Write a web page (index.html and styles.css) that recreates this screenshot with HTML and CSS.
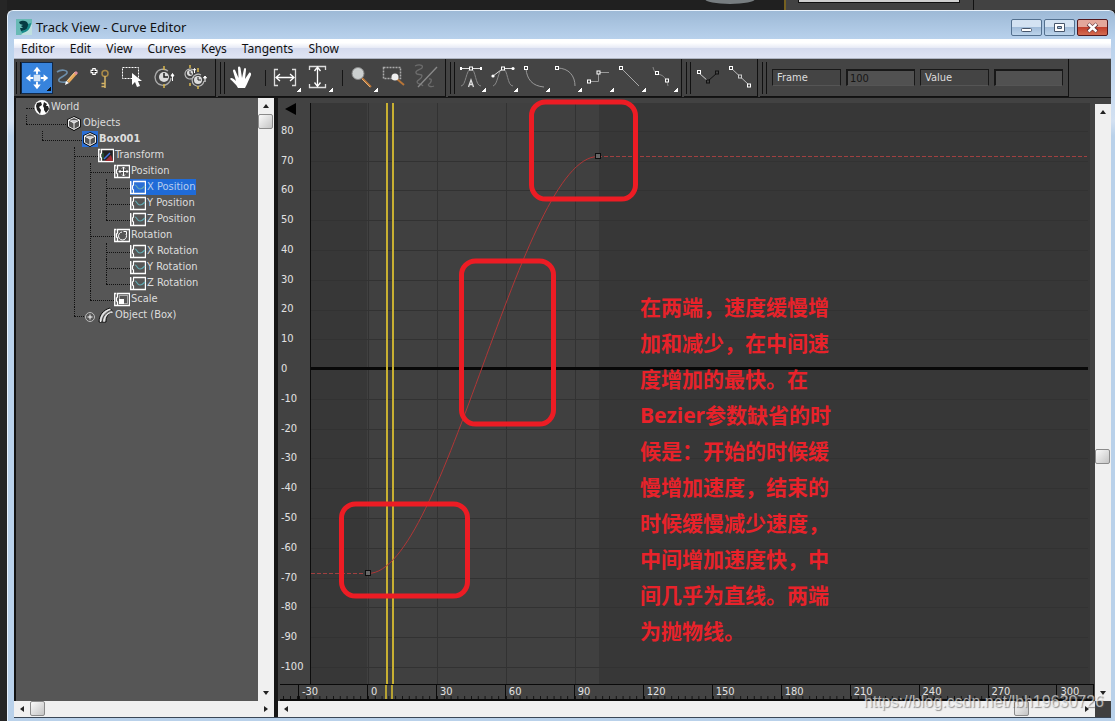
FILE: index.html
```
<!DOCTYPE html>
<html lang="zh-CN">
<head>
  <meta charset="UTF-8">
  <title>Track View - Curve Editor</title>
  <link rel="stylesheet" href="styles.css">
</head>
<body>
  <!-- shared icons -->
  <svg class="defs" aria-hidden="true">
    <symbol id="i-cube" viewBox="0 0 16 16">
      <path d="M8 2.5 13.5 5v6.5L8 14.5 2.5 11.500V5z" fill="#c8c8cc" stroke="#000" stroke-width="2.500"/>
      <path d="M8 2.500 13.500 5v6.500L8 14.500 2.500 11.500V5zM2.500 5 8 8l5.500-3M8 8v6" fill="#555" stroke="#f4f4f4"/>
    </symbol>
    <symbol id="i-curve" viewBox="0 0 16 16">
      <path d="M3 2.500h12.500v12H.5v-12" fill="none" stroke="#fff" stroke-width="1.400"/>
      <path d="M.7 2v13M3.500 3v3l-1 1v3l1 1v3" fill="none" stroke="#fff" stroke-width="1.200"/>
      <path d="M5 6c2 0 2 4 5 4 2 0 3-1 5-3" fill="none" stroke="#62aab2" stroke-width="1.200"/>
    </symbol>
    <symbol id="i-box" viewBox="0 0 16 16">
      <path d="M3 2.500h12.500v12H.7v-12h1.800M3.500 3v3l-1 1v3l1 1v3" fill="none" stroke="#fff" stroke-width="1.300"/>
    </symbol>
  </svg>

  <div class="desktop">
    <div class="behind">
      <svg class="blob" viewBox="0 0 60 10"><ellipse cx="30" cy="-1" rx="25" ry="5" fill="#777d80"/></svg>
      <div class="behind-panel"><div class="behind-field"></div></div>
      <div class="behind-rest"></div>
    </div>

    <div class="window">
      <div class="titlebar">
        <svg class="logo" viewBox="0 0 16 16">
          <rect width="16" height="16" fill="#bfe0df"/>
          <path d="M0 0h16v5L5 16H0z" fill="#68bab5"/>
          <path d="M3 3c3-2 8-2 9 2 1 3-1 7-7 7l-1-3h3L5 7l2-1-3-1z" fill="#063b43"/>
          <path d="M12 5l3-1c0 5-3 9-9 10l-1-2c5 0 7-3 7-7z" fill="#178b8a"/>
        </svg>
        <span class="title">Track View - Curve Editor</span>
        <button class="win-btn" aria-label="Minimize"><svg viewBox="0 0 29 15"><rect x="9.500" y="8.500" width="10" height="3" rx="1" fill="#fff" stroke="#46556b"/></svg></button>
        <button class="win-btn" aria-label="Maximize"><svg viewBox="0 0 29 15"><path d="M9.500 3.500h10v8h-10zM12.500 6.500h4v2h-4z" fill="#fff" fill-rule="evenodd" stroke="#46556b"/></svg></button>
        <button class="win-btn close" aria-label="Close"><svg viewBox="0 0 29 15"><path d="M10 4l9 7.500M19 4l-9 7.500" stroke="#5b3037" stroke-width="4"/><path d="M10.500 4l8 7.500M18.500 4l-8 7.500" stroke="#fff" stroke-width="2.400"/></svg></button>
      </div>

      <div class="client">
        <nav class="menubar">
          <a href="#">Editor</a>
          <a href="#">Edit</a>
          <a href="#">View</a>
          <a href="#">Curves</a>
          <a href="#">Keys</a>
          <a href="#">Tangents</a>
          <a href="#">Show</a>
        </nav>

        <div class="toolbar">
          <div class="group">
            <button class="tool active fly" aria-label="Move keys"><svg viewBox="0 0 32 32">
              <rect x="12.500" y="12.500" width="7" height="7" fill="#d3e5f8"/>
              <path d="M16 4l4 5h-3v3h-2V9h-3zM16 28l4-5h-3v-3h-2v3h-3zM4 16l5-4v3h3v2H9v3zM28 16l-5-4v3h-3v2h3v3z" fill="#fff"/></svg></button>
            <button class="tool" aria-label="Draw curves"><svg viewBox="0 0 32 32">
              <path d="M4 10c4-3 11-2 10 1-1 3-10 5-8 8 1 2 6 1 9 1" fill="none" stroke="#6d8fab" stroke-width="1.600"/>
              <path d="M15 20l8-9" stroke="#e8a95a" stroke-width="3"/><path d="M14 19l8-9" stroke="#f7d69a"/><path d="M22 12l2-2" stroke="#db8c9b" stroke-width="3"/><path d="M12 23l1-4 3 2z" fill="#fff"/></svg></button>
            <button class="tool" aria-label="Add keys"><svg viewBox="0 0 32 32">
              <path d="M9 6v7M5.500 9.500h7" stroke="#fff" stroke-width="3.500"/><path d="M9 7v5M6.500 9.500h5" stroke="#222"/>
              <circle cx="20" cy="11.500" r="3" fill="none" stroke="#a98a48" stroke-width="1.500"/><path d="M20 14v12M16.500 21.500H20M16.500 24.500H20" stroke="#d6b566" stroke-width="1.500"/></svg></button>
            <button class="tool" aria-label="Region tool"><svg viewBox="0 0 32 32">
              <rect x="5.500" y="5.500" width="16" height="11" fill="none" stroke="#fff" stroke-dasharray="2 1"/>
              <path d="M15 11v12l3-3 2 5 3-1-2-5h4z" fill="#fff"/></svg></button>
            <button class="tool" aria-label="Retime tool"><svg viewBox="0 0 32 32">
              <path d="M19 9a8 8 0 1 0 3 7" fill="none" stroke="#aaa" stroke-width="1.300"/><circle cx="15" cy="15" r="5" fill="#ddd"/><path d="M15 11v4h4" fill="none" stroke="#222" stroke-width="1.500"/><path d="M15 4v4M15 22v4" stroke="#d9b74c" stroke-width="1.500"/><path d="M23.500 12v7M22 14l1.500-2.500L25 14z" stroke="#fff" fill="#fff"/></svg></button>
            <button class="tool" aria-label="Retime all"><svg viewBox="0 0 32 32">
              <path d="M12 8a5 5 0 1 0 1 7M20 13a6 6 0 1 0 3 6" fill="none" stroke="#bbb" stroke-width="1.200"/><circle cx="9" cy="11" r="3" fill="#ddd"/><circle cx="17" cy="18" r="4" fill="#ddd"/><path d="M9 9v3h2M17 15v3h3" fill="none" stroke="#222"/><path d="M9 3v3M17 6v4M9 21v3M17 24v3" stroke="#d9b74c" stroke-width="1.500"/><path d="M24 14v6M22.500 16l1.500-2 1.500 2zM13.500 7v4M12.500 8l1-1.500 1 1.500z" stroke="#fff" fill="#fff"/></svg></button>
          </div>
          <div class="group">
            <button class="tool" aria-label="Pan"><svg viewBox="0 0 32 32">
              <path d="M13 26c-2-4-5-6-8-9 1-2 3-1 6 2L8 9c0-2 2-2 2.500 0l3 7-.5-10c0-2 2-2 2.500 0L17 16l2-9c.5-2 2.500-1 2 1l-1 9 4-6c1-1 2.500 0 2 2l-4 9c-1 2-1 2-2 4z" fill="#fff"/></svg></button>
            <span class="sep"></span>
            <button class="tool fly" aria-label="Frame horizontal extents"><svg viewBox="0 0 32 32">
              <path d="M8 7.500H4.500v16H8M22 7.500h3.500v16H22" fill="none" stroke="#ddd" stroke-width="1.300"/><path d="M6 15.500h18M10 12l-4 3.500 4 3.500M20 12l4 3.500-4 3.500" fill="none" stroke="#fff" stroke-width="1.300"/></svg></button>
            <button class="tool fly" aria-label="Frame value extents"><svg viewBox="0 0 32 32">
              <path d="M7.500 8V4.500h16V8M7.500 22v3.500h16V22" fill="none" stroke="#ddd" stroke-width="1.300"/><path d="M15.500 6v18M12.500 9l3-4 3 4M12.500 20.500l3 4 3-4" fill="none" stroke="#fff" stroke-width="1.300"/></svg></button>
            <span class="sep"></span>
            <button class="tool fly" aria-label="Zoom"><svg viewBox="0 0 32 32">
              <path d="M15 16l9 9" stroke="#b77538" stroke-width="2"/><path d="M15 17l8 8" stroke="#e6b075"/><circle cx="11" cy="11.500" r="6" fill="#ccd0d0" stroke="#888"/></svg></button>
            <button class="tool" aria-label="Zoom region"><svg viewBox="0 0 32 32">
              <rect x="4.500" y="5.500" width="17" height="11" fill="none" stroke="#aaa" stroke-width="1.500" stroke-dasharray="2 1"/><path d="M18 17l7 6" stroke="#b77538" stroke-width="2"/><circle cx="16" cy="15" r="3.500" fill="#eee"/></svg></button>
            <button class="tool" aria-label="Isolate curve"><svg viewBox="0 0 32 32">
              <path d="M4 4c4-2 9-1 7 2-2 2-7 2-6 5s6 0 6 3-5 4-5 6 5 2 6 4M18 17c4-1 2 4 0 5s1 4 5 2" fill="none" stroke="#6c6c6c" stroke-width="1.300"/><path d="M7 25 26 5" stroke="#8a8a8a" stroke-width="1.300"/></svg></button>
          </div>
          <div class="group">
            <button class="tool fly" aria-label="Auto tangents"><svg viewBox="0 0 32 32">
              <path d="M6 24c5 0 5-17 10-17s4 17 10 17" fill="none" stroke="#888"/><path d="M5 6.500h22" stroke="#ddd"/><path d="M5 6.500h2M25 6.500h2" stroke="#fff" stroke-width="3"/><rect x="14.500" y="5" width="3" height="3" fill="#444" stroke="#fff"/><path d="M13.500 25l2.500-7 2.500 7M14.500 22.500h3" fill="none" stroke="#ddd" stroke-width="1.300"/></svg></button>
            <button class="tool fly" aria-label="Spline tangents"><svg viewBox="0 0 32 32">
              <path d="M6 24c5-1 5-17 10-17s4 17 10 17" fill="none" stroke="#888"/><path d="M6 14l10-7.500h10" fill="none" stroke="#ddd"/><circle cx="6" cy="14" r="1.600" fill="#fff"/><circle cx="26" cy="6.500" r="1.600" fill="#fff"/><rect x="14.500" y="5" width="3" height="3" fill="#444" stroke="#fff"/></svg></button>
            <button class="tool fly" aria-label="Fast tangents"><svg viewBox="0 0 32 32">
              <path d="M7 7c1 10 6 17 18 18" fill="none" stroke="#999"/><rect x="5.500" y="4.500" width="3" height="3" fill="#444" stroke="#fff"/></svg></button>
            <button class="tool fly" aria-label="Slow tangents"><svg viewBox="0 0 32 32">
              <path d="M6 6c12 0 18 8 18 18" fill="none" stroke="#999"/><rect x="4.500" y="4.500" width="3" height="3" fill="#444" stroke="#fff"/></svg></button>
            <button class="tool fly" aria-label="Stepped tangents"><svg viewBox="0 0 32 32">
              <path d="M6 19.500h9.500v-9H26" fill="none" stroke="#999"/><rect x="4.500" y="18" width="3" height="3" fill="#444" stroke="#fff"/><rect x="14" y="9" width="3" height="3" fill="#444" stroke="#fff"/></svg></button>
            <button class="tool fly" aria-label="Linear tangents"><svg viewBox="0 0 32 32">
              <path d="M6 6l18 18" stroke="#aaa"/><rect x="4.500" y="4.500" width="3" height="3" fill="#444" stroke="#fff"/></svg></button>
            <button class="tool fly" aria-label="Smooth tangents"><svg viewBox="0 0 32 32">
              <path d="M6 5c1 6 5 7 8 8s6 5 7 11" fill="none" stroke="#888"/><rect x="8.500" y="9.500" width="3" height="3" fill="#444" stroke="#fff"/><rect x="18.500" y="17" width="3" height="3" fill="#444" stroke="#fff"/></svg></button>
          </div>
          <div class="group">
            <button class="tool" aria-label="Break tangents"><svg viewBox="0 0 32 32">
              <path d="M8 11l9 8" stroke="#ccc"/><path d="M17 19l9-8" stroke="#111"/><rect x="6.500" y="8.500" width="3" height="3" fill="#444" stroke="#fff"/><rect x="15.500" y="18" width="3" height="3" fill="#444" stroke="#111"/><rect x="24.500" y="9" width="3" height="3" fill="#444" stroke="#111"/></svg></button>
            <button class="tool" aria-label="Unify tangents"><svg viewBox="0 0 32 32">
              <path d="M8 6l18 17" stroke="#bbb"/><rect x="6.500" y="4.500" width="3" height="3" fill="#444" stroke="#fff"/><rect x="15.500" y="13" width="3" height="3" fill="#444" stroke="#ccc"/><rect x="24.500" y="22" width="3" height="3" fill="#444" stroke="#fff"/></svg></button>
          </div>
          <div class="group fields">
            <label for="frame">Frame</label>
            <input type="text" id="frame" value="100">
            <label for="value">Value</label>
            <input type="text" id="value">
          </div>
        </div>

        <div class="panes">
          <div class="tree-pane">
            <ul class="tree">
              <li class="root">
                <div class="row"><svg viewBox="0 0 16 16"><circle cx="8" cy="8.500" r="7.500" fill="#fff"/><path d="M3 4l4-1 1 3-3 2 2 3-1 4-3-4-1-4zM10 3l3 2-1 2h2l1 3-3 4-2-3V9L9 7z" fill="#222"/></svg><span>World</span></div>
                <ul class="flush">
                  <li class="wide">
                    <div class="row"><svg><use href="#i-cube"/></svg><span>Objects</span></div>
                    <ul>
                      <li class="wide">
                        <div class="row bold"><svg class="hot"><use href="#i-cube"/></svg><span>Box001</span></div>
                        <ul class="deep">
                          <li>
                            <div class="row"><svg viewBox="0 0 16 16"><rect x="4" y="3" width="11" height="11" fill="#222"/><use href="#i-box"/><path d="M6 12l6-6" stroke="#4272dd" stroke-width="1.500"/><path d="M7 14h8l-2-6z" fill="#a32c32"/><path d="M5 12V6" stroke="#287844"/></svg><span>Transform</span></div>
                            <ul>
                              <li>
                                <div class="row"><svg viewBox="0 0 16 16"><use href="#i-box"/><path d="M9.500 4v9M5 8.500h9" stroke="#fff"/><path d="M8 5.500 9.500 4 11 5.500M8 11.500 9.500 13l1.500-1.500M6.500 7 5 8.500 6.500 10M12.500 7 14 8.500 12.500 10" fill="none" stroke="#fff"/></svg><span>Position</span></div>
                                <ul>
                                  <li><div class="row"><svg class="hot"><use href="#i-curve"/></svg><span class="selected">X Position</span></div></li>
                                  <li><div class="row"><svg><use href="#i-curve"/></svg><span>Y Position</span></div></li>
                                  <li><div class="row"><svg><use href="#i-curve"/></svg><span>Z Position</span></div></li>
                                </ul>
                              </li>
                              <li>
                                <div class="row"><svg viewBox="0 0 16 16"><use href="#i-box"/><path d="M8 5a4 4 0 1 0 4 2M9.500 4.500h3v3" fill="none" stroke="#fff"/></svg><span>Rotation</span></div>
                                <ul>
                                  <li><div class="row"><svg><use href="#i-curve"/></svg><span>X Rotation</span></div></li>
                                  <li><div class="row"><svg><use href="#i-curve"/></svg><span>Y Rotation</span></div></li>
                                  <li><div class="row"><svg><use href="#i-curve"/></svg><span>Z Rotation</span></div></li>
                                </ul>
                              </li>
                              <li><div class="row"><svg viewBox="0 0 16 16"><use href="#i-box"/><rect x="5.500" y="4.500" width="8" height="8" fill="none" stroke="#fff" stroke-dasharray="1 1"/><path d="M5 8h5v5H5z" fill="#fff"/></svg><span>Scale</span></div></li>
                            </ul>
                          </li>
                          <li class="closed">
                            <div class="row"><button class="expand" aria-label="Expand"><svg viewBox="0 0 12 12"><circle cx="6" cy="6" r="4.500" fill="#555" stroke="#bbb"/><path d="M6 3.500v5M3.500 6h5" stroke="#fff"/></svg></button><svg viewBox="0 0 16 16"><path d="M1 15C1 8 5 3 12 1l3 4c-5 1-7 5-7 10z" fill="#bbb" stroke="#111"/><path d="M2.500 15c0-6 4-11 10-13M6 15c0-5 3-9 9-10" fill="none" stroke="#f6f6f6"/><path d="M4.300 15c0-6 4-10 9-11.500" fill="none" stroke="#333"/></svg><span>Object (Box)</span></div>
                          </li>
                        </ul>
                      </li>
                    </ul>
                  </li>
                </ul>
              </li>
            </ul>
            <div class="scroll vertical tree-v">
              <button class="up" aria-label="Scroll up"></button>
              <div class="thumb"></div>
              <button class="down" aria-label="Scroll down"></button>
            </div>
            <div class="scroll horizontal tree-h">
              <button class="left" aria-label="Scroll left"></button>
              <div class="thumb"></div>
              <button class="right" aria-label="Scroll right"></button>
            </div>
          </div>

          <div class="chart-pane">
            <div class="chart">
              <div class="y-axis">
                <svg class="marker" viewBox="0 0 12 12"><path d="M0 6 11 0v12z"/></svg>
                <span>80</span><span>70</span><span>60</span><span>50</span><span>40</span><span>30</span><span>20</span><span>10</span><span>0</span><span>-10</span><span>-20</span><span>-30</span><span>-40</span><span>-50</span><span>-60</span><span>-70</span><span>-80</span><span>-90</span><span>-100</span>
              </div>
              <div class="plot">
                <svg viewBox="0 0 779 581" preserveAspectRatio="none">
                  <rect class="range" x="56" width="232" height="581"/>
                  <path class="grid" d="M0 28.500h777M0 58.500h777M0 87.500h777M0 117.500h777M0 147.500h777M0 177.500h777M0 207.500h777M0 236.500h777M0 296.500h777M0 326.500h777M0 355.500h777M0 385.500h777M0 415.500h777M0 445.500h777M0 475.500h777M0 504.500h777M0 534.500h777M0 564.500h777"/>
                  <path class="grid" d="M57.500 0v581M126.500 0v581M195.500 0v581M264.500 0v581"/>
                  <path class="zero" d="M0 265.500h777"/>
                  <path class="time" d="M76 0v581M82 0v581"/>
                  <path class="curve dashed" d="M0 470.500h57M287 53.500h489"/>
                  <path class="curve" d="M57 470.500C134 470.500 210 53.500 287 53.500"/>
                  <rect class="key" x="54.500" y="467.500" width="5" height="5"/>
                  <rect class="key" x="284.500" y="50.500" width="5" height="5"/>
                  <rect class="mark" x="220.500" y="-1" width="104" height="97" rx="14"/>
                  <rect class="mark" x="150.500" y="158" width="92" height="163" rx="14"/>
                  <rect class="mark" x="30.500" y="401" width="126" height="92" rx="14"/>
                </svg>
                <p class="note">在两端，速度缓慢增<br>加和减少，在中间速<br>度增加的最快。在<br>Bezier参数缺省的时<br>候是：开始的时候缓<br>慢增加速度，结束的<br>时候缓慢减少速度，<br>中间增加速度快，中<br>间几乎为直线。两端<br>为抛物线。</p>
              </div>
              <div class="ruler">
                <span>-30</span><span>0</span><span>30</span><span>60</span><span>90</span><span>120</span><span>150</span><span>180</span><span>210</span><span>240</span><span>270</span><span>300</span>
                <svg class="ruler-time" viewBox="0 0 8 14"><path d="M1 0v14M7 0v14"/></svg>
              </div>
            </div>
            <div class="scroll vertical chart-v">
              <button class="up" aria-label="Scroll up"></button>
              <div class="thumb"></div>
              <button class="down" aria-label="Scroll down"></button>
            </div>
            <div class="scroll horizontal chart-h">
              <button class="left" aria-label="Scroll left"></button>
              <div class="thumb"></div>
              <button class="right" aria-label="Scroll right"></button>
            </div>
            <div class="corner"></div>
          </div>
        </div>
      </div>
    </div>
    <div class="watermark">https://blog.csdn.net/lbh19630726</div>
  </div>
</body>
</html>
```
FILE: styles.css
```
*,
*::before {
  box-sizing: border-box;
}
body {
  margin: 0;
  font-family: "Noto Sans", "Noto Sans CJK SC", sans-serif;
  font-size: 12px;
  background: #262626;
}
button {
  padding: 0;
  border: none;
  background: none;
}
svg {
  display: block;
}
.defs {
  position: absolute;
  width: 0;
  height: 0;
}
.desktop {
  position: relative;
  display: flex;
  flex-direction: column;
  height: 100vh;
  min-height: 500px;
  padding-left: 7px;
  background: #262626;
}

/* application behind the window */
.behind {
  display: flex;
  justify-content: flex-end;
  height: 10px;
  background: #202020;
}
.blob {
  width: 60px;
  height: 10px;
  margin-right: 24px;
}
.behind-panel {
  width: 190px;
  padding-left: 12px;
  background: #424242;
  border-left: 2px solid #756020;
  border-right: 1px solid #111;
}
.behind-field {
  width: 162px;
  height: 3px;
  background: #d0d0d0;
  border: solid #111;
  border-width: 0 1px 1px;
}
.behind-rest {
  width: 141px;
  background: #424242;
}

/* window frame */
.window {
  flex: 1;
  min-height: 0;
  display: flex;
  flex-direction: column;
  padding: 0 4px 3px 6px;
  border-left: 1px solid #e8f2fc;
  border-top: 1px solid #e8f2fc;
  border-radius: 6px 6px 0 0;
  background: linear-gradient(#9db9d6, #b8d1ec 28px, #d3e1f2 110px, #b9d1ea 125px);
}
.titlebar {
  display: flex;
  align-items: center;
  gap: 2px;
  height: 28px;
  padding: 4px 3px 0 2px;
}
.logo {
  width: 16px;
  height: 16px;
}
.title {
  flex: 1;
  padding-left: 2px;
  font-size: 13px;
  color: #111;
}
.win-btn {
  width: 31px;
  height: 17px;
  border: 1px solid #53708f;
  border-radius: 2px;
  background: linear-gradient(#d3e2f2 45%, #a1bcd9 50%, #bdd4eb);
}
.win-btn.close {
  border-color: #53181d;
  background: linear-gradient(#e3a79b 45%, #c2402d 50%, #d36c52);
}
.client {
  flex: 1;
  min-height: 0;
  display: flex;
  flex-direction: column;
  background: #434343;
  border-bottom: 1px solid #3a4756;
}
.menubar {
  display: flex;
  align-items: center;
  gap: 15px;
  height: 20px;
  padding-left: 7px;
  background: linear-gradient(#fff 20%, #e8ebf6 45%, #d5dbee 50%, #dfe4f3);
  border-bottom: 1px solid #aeb4c2;
}
.menubar a {
  color: #111;
  text-decoration: none;
}

/* toolbar */
.toolbar {
  display: flex;
  gap: 2px;
  height: 39px;
  border-bottom: 1px solid #161616;
}
.group {
  display: flex;
  align-items: center;
  padding: 0 2px;
  border-right: 1px solid #111;
  border-bottom: 1px solid #111;
  background: #444;
}
.group::before {
  content: "";
  width: 5px;
  height: 32px;
  border: solid #111;
  border-width: 0 1px;
}
.tool {
  position: relative;
  width: 32px;
  height: 32px;
}
.tool.active {
  border: 1px solid #10294a;
  background: #3783dc;
}
.tool.fly::after {
  content: "";
  position: absolute;
  right: 1px;
  bottom: 2px;
  width: 4px;
  height: 4px;
  background: linear-gradient(135deg, transparent 45%, #fff 45%);
}
.tool.active::after {
  background: linear-gradient(135deg, transparent 50%, #111 50%);
}
.sep {
  width: 1px;
  height: 16px;
  margin: 0 4px 0 8px;
  background: #151515;
}
.fields {
  gap: 5px;
  padding-right: 5px;
  font-family: "DejaVu Sans Condensed", "Noto Sans", sans-serif;
  font-size: 11px;
}
.fields label,
.fields input {
  width: 69px;
  height: 17px;
  line-height: 15px;
  padding: 0 4px;
  color: #ddd;
  border: 1px solid #181818;
  border-bottom-color: #555;
}
.fields input {
  border-left-width: 2px;
  border-top-width: 2px;
  padding: 0 2px;
  background: #515151;
  color: #161616;
  font: inherit;
}

/* track tree */
.panes {
  flex: 1;
  min-height: 0;
  display: flex;
}
.tree-pane {
  display: grid;
  grid-template-columns: 244px 16px;
  grid-template-rows: 1fr 16px;
  border-right: 4px solid #161616;
}
.tree {
  overflow: hidden;
  padding: 1px 0 0 12px;
  background: #565656;
  border-left: 2px solid #111;
  font-family: "DejaVu Sans Condensed", "Noto Sans", sans-serif;
  font-size: 11px;
  color: #ddd;
}
.tree,
.tree ul {
  margin: 0;
  list-style: none;
}
.tree > li {
  margin-left: -2px;
}
.tree ul {
  padding-left: 16px;
}
.tree ul.flush {
  padding-left: 0;
}
.tree ul.deep {
  padding-left: 32px;
}
.tree li {
  position: relative;
}
.tree li::before {
  content: "";
  position: absolute;
  left: 0;
  top: 0;
  height: 100%;
  border-left: 1px dotted #111;
}
.tree li:last-child::before {
  height: 9px;
}
.tree .root::before {
  display: none;
}
.row {
  display: flex;
  height: 16px;
  line-height: 15px;
  white-space: nowrap;
}
.row::before {
  content: "";
  width: 24px;
  height: 10px;
  border-bottom: 1px dotted #111;
}
.root > .row::before {
  width: 8px;
}
.wide > .row::before {
  width: 40px;
}
.closed > .row::before {
  width: 10px;
}
.row svg {
  width: 16px;
  height: 16px;
}
.row span {
  padding: 0 1px;
}
.row .hot {
  background: #2a6fd6;
}
.row .selected {
  background: #1f6bd8;
  color: #b9cdee;
}
.bold {
  font-weight: bold;
}
.expand {
  width: 14px;
  height: 16px;
}
.expand svg {
  width: 12px;
  height: 12px;
  margin-top: 4px;
}

/* scroll bars */
.scroll {
  display: flex;
  background: #f0f0f0;
}
.vertical {
  flex-direction: column;
}
.scroll button {
  display: flex;
  align-items: center;
  justify-content: center;
  width: 16px;
  height: 16px;
}
.scroll button::before {
  content: "";
  border: 3px solid transparent;
}
.scroll .up::before {
  border-bottom: 4px solid #222;
  border-top: none;
}
.scroll .down::before {
  border-top: 4px solid #222;
  border-bottom: none;
}
.scroll .left::before {
  border-right: 4px solid #222;
  border-left: none;
}
.scroll .right::before {
  border-left: 4px solid #222;
  border-right: none;
}
.scroll .down {
  margin-top: auto;
}
.scroll .right {
  margin-left: auto;
}
.thumb {
  width: 15px;
  height: 15px;
  border: 1px solid #8b8b8b;
  border-radius: 2px;
  background: linear-gradient(135deg, #fafafa, #c4c4c4);
}
.tree-h {
  grid-column: 1 / 3;
}
.chart-v {
  margin-top: 6px;
}
.chart-v .thumb {
  margin-top: calc(58vh - 89px);
}
.chart-h .thumb {
  margin-left: auto;
}
.chart-h .right {
  margin-left: 50px;
}
.corner {
  background: #3f3f3f;
}

/* curve chart */
.chart-pane {
  flex: 1;
  min-width: 0;
  display: grid;
  grid-template-columns: 1fr 16px;
  grid-template-rows: 1fr 16px;
}
.chart {
  position: relative;
  display: grid;
  grid-template-columns: 32px 1fr;
  grid-template-rows: 1fr 17px;
  min-width: 0;
  min-height: 0;
  padding: 5px 1px 0 0;
  background: #424242;
  font-family: "DejaVu Sans Condensed", "Noto Sans", sans-serif;
  font-size: 11px;
  color: #e2e2e2;
}
.y-axis {
  display: flex;
  flex-direction: column;
  justify-content: space-between;
  padding: 0 0 11px 3px;
}
.y-axis span {
  height: 12px;
  line-height: 12px;
}
.marker {
  width: 12px;
  height: 12px;
  margin-left: 4px;
  margin-bottom: -8px;
}
.plot {
  position: relative;
  min-height: 0;
  margin-right: 4px;
  border-left: 1px solid #0c0c0c;
  background: #373737;
}
.plot svg {
  width: 100%;
  height: 100%;
  overflow: visible;
}
.range {
  fill: #404040;
}
.grid {
  stroke: #323232;
  fill: none;
}
.zero {
  stroke: #080808;
  stroke-width: 3;
}
.time {
  stroke: #c8b032;
  stroke-width: 2;
}
.curve {
  fill: none;
  stroke: #b03636;
}
.dashed {
  stroke: #a04040;
  stroke-dasharray: 4 2;
}
.key {
  fill: #666;
  stroke: #0c0c0c;
}
.mark {
  fill: none;
  stroke: #ed1c24;
  stroke-width: 5;
}
.note {
  position: absolute;
  left: 329px;
  top: 186px;
  margin: 0;
  font-family: "Open Sans", "Noto Sans CJK SC", sans-serif;
  font-size: 21px;
  font-weight: bold;
  line-height: 36px;
  white-space: nowrap;
  color: #e8222a;
}
.ruler {
  position: relative;
  grid-column: 1 / 3;
  display: flex;
  margin-left: 2px;
  padding-left: 18px;
  border: solid #0a0a0a;
  border-width: 1px 1px 2px 0;
  background: repeating-linear-gradient(to right, transparent 0 3px, #111 3px 4px, transparent 4px 7px) bottom left / 18px 3px no-repeat #434343;
}
.ruler span {
  flex: 30 1 0;
  min-width: 0;
  padding-left: 3px;
  line-height: 13px;
  border-left: 1px solid #0a0a0a;
  background: linear-gradient(to right, #111 1px, transparent 1px) bottom left / 10% 3px repeat-x;
}
.ruler span:last-of-type {
  flex-grow: 15;
}
.ruler-time {
  position: absolute;
  left: 105px;
  top: 0;
  width: 8px;
  height: 14px;
  stroke: #b5a133;
  stroke-width: 2;
}
.watermark {
  position: absolute;
  right: 11px;
  bottom: 9px;
  font-family: "Liberation Sans", Arial, sans-serif;
  font-size: 16px;
  line-height: 20px;
  color: rgba(255, 255, 255, 0.6);
  text-shadow: 1px 1px 1px rgba(80, 80, 80, 0.6);
}
```
